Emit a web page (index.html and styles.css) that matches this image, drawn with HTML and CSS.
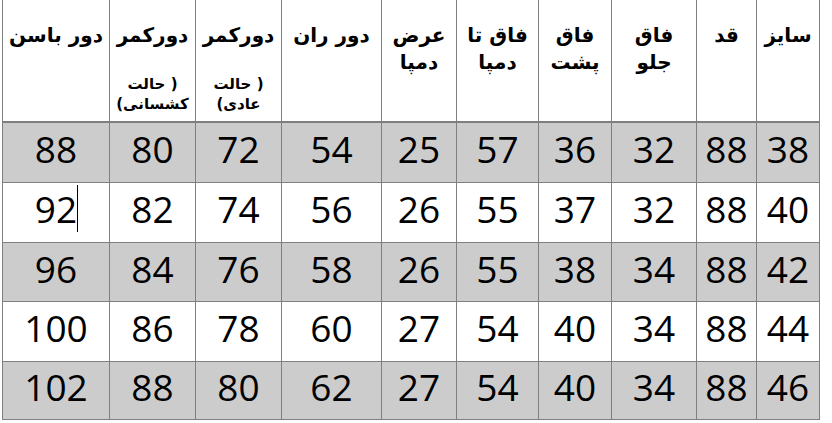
FILE: index.html
```html
<!DOCTYPE html>
<html lang="fa">
<head>
<meta charset="utf-8">
<title>جدول سایز</title>
<link rel="stylesheet" href="styles.css">
</head>
<body>
<div class="chart" dir="rtl">
  <div class="row">
    <div class="cell head">سایز</div>
    <div class="cell head">قد</div>
    <div class="cell head">فاق<br>جلو</div>
    <div class="cell head">فاق<br>پشت</div>
    <div class="cell head">فاق تا<br>دمپا</div>
    <div class="cell head">عرض<br>دمپا</div>
    <div class="cell head">دور ران</div>
    <div class="cell head">دورکمر
      <div class="sub"><div>( حالت</div><div>عادی)</div></div>
    </div>
    <div class="cell head">دورکمر
      <div class="sub"><div>( حالت</div><div>کشسانی)</div></div>
    </div>
    <div class="cell head">دور باسن</div>
  </div>
  <div class="row shaded">
    <div class="cell">38</div><div class="cell">88</div><div class="cell">32</div><div class="cell">36</div><div class="cell">57</div>
    <div class="cell">25</div><div class="cell">54</div><div class="cell">72</div><div class="cell">80</div><div class="cell">88</div>
  </div>
  <div class="row">
    <div class="cell">40</div><div class="cell">88</div><div class="cell">32</div><div class="cell">37</div><div class="cell">55</div>
    <div class="cell">26</div><div class="cell">56</div><div class="cell">74</div><div class="cell">82</div><div class="cell"><span class="caret">92</span></div>
  </div>
  <div class="row shaded">
    <div class="cell">42</div><div class="cell">88</div><div class="cell">34</div><div class="cell">38</div><div class="cell">55</div>
    <div class="cell">26</div><div class="cell">58</div><div class="cell">76</div><div class="cell">84</div><div class="cell">96</div>
  </div>
  <div class="row">
    <div class="cell">44</div><div class="cell">88</div><div class="cell">34</div><div class="cell">40</div><div class="cell">54</div>
    <div class="cell">27</div><div class="cell">60</div><div class="cell">78</div><div class="cell">86</div><div class="cell">100</div>
  </div>
  <div class="row shaded">
    <div class="cell">46</div><div class="cell">88</div><div class="cell">34</div><div class="cell">40</div><div class="cell">54</div>
    <div class="cell">27</div><div class="cell">62</div><div class="cell">80</div><div class="cell">88</div><div class="cell">102</div>
  </div>
</div>
</body>
</html>
```
FILE: styles.css
```css
html, body {
  margin: 0;
  background: #ffffff;
}

.chart {
  direction: rtl;
  display: grid;
  grid-template-columns: 62px 59px 84px 72px 81px 74px 99px 85px 85px 106px;
  grid-template-rows: 122px 59px 59px 58px 59px 57px;
  gap: 1px;
  width: max-content;
  margin-left: 2px;
  padding: 0 1px 1px 1px;
  background: #7f7f7f;
}

.row {
  display: contents;
}

.cell {
  background: #ffffff;
  color: #000000;
  font-family: "Open Sans", "DejaVu Sans", sans-serif;
  font-size: 37px;
  line-height: 37px;
  display: flex;
  align-items: center;
  justify-content: center;
  padding-bottom: 8px;
  box-sizing: border-box;
  direction: ltr;
}

.shaded .cell {
  background: #cccccc;
}

.cell.head {
  direction: rtl;
  display: block;
  font-family: "DejaVu Sans", sans-serif;
  font-weight: bold;
  font-size: 20px;
  line-height: 27px;
  text-align: center;
  padding: 22px 0 0 0;
  border-bottom: 1px solid #7f7f7f;
}

.sub {
  direction: rtl;
  font-size: 15px;
  line-height: 20px;
  margin-top: 25px;
  text-align: center;
}

.caret {
  position: relative;
}

.caret::after {
  content: "";
  position: absolute;
  right: -1px;
  top: -5px;
  width: 1px;
  height: 47px;
  background: #000000;
}
```
